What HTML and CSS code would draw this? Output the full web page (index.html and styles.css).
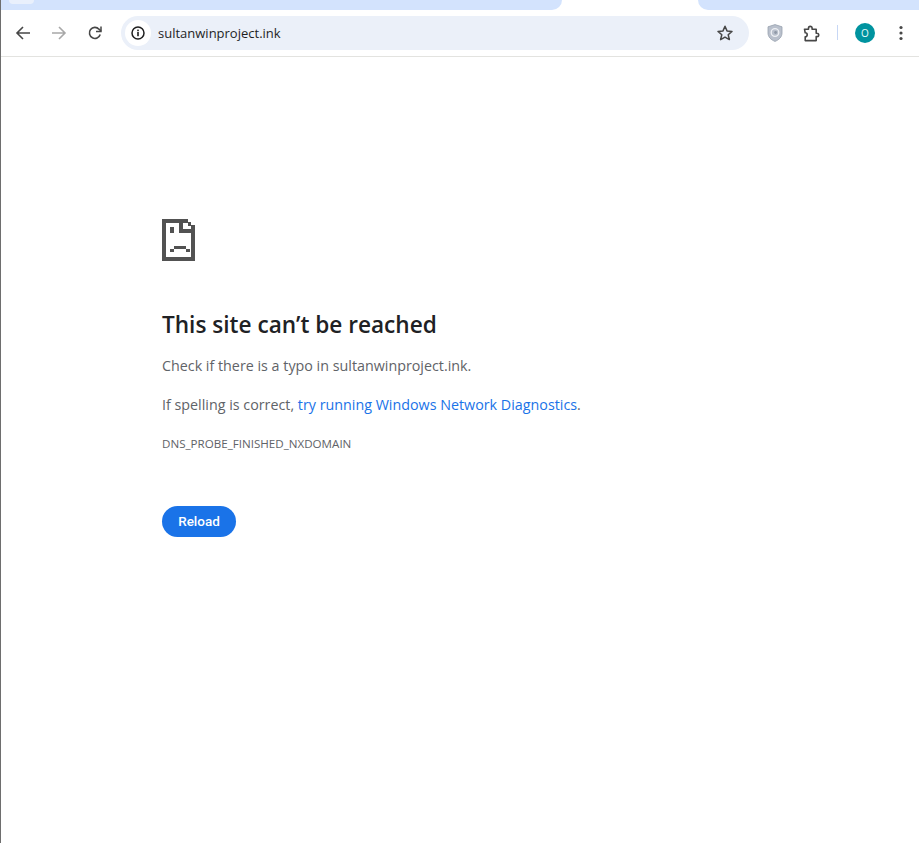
FILE: index.html
```html
<!DOCTYPE html>
<html lang="en">
<head>
<meta charset="utf-8">
<title>sultanwinproject.ink</title>
<link rel="stylesheet" href="styles.css">
</head>
<body>
<div class="window">
  <div class="tabstrip">
    <div class="tab-inactive tab-left"><span class="tab-chip"></span></div>
    <div class="tab-active"></div>
    <div class="tab-inactive tab-right"></div>
  </div>
  <header class="toolbar">
    <button class="nav-btn" aria-label="Back">
      <svg width="16" height="16" viewBox="0 0 16 16" fill="none" stroke="#474747" stroke-width="1.6"><path d="M15 8H2M8 2L2 8l6 6"/></svg>
    </button>
    <button class="nav-btn" aria-label="Forward">
      <svg width="16" height="16" viewBox="0 0 16 16" fill="none" stroke="#a8a8a8" stroke-width="1.6"><path d="M1 8h13M8 2l6 6-6 6"/></svg>
    </button>
    <button class="nav-btn" aria-label="Reload">
      <svg width="16" height="16" viewBox="0 0 16 16" fill="none" stroke="#474747" stroke-width="1.6"><path d="M13.2 9.5A5.500 5.500 0 1 1 12 4.200L14 6"/><path d="M14 1.500V6.600H9" stroke-width="1.500"/></svg>
    </button>
    <div class="omnibox">
      <span class="site-info">
        <svg width="16" height="16" viewBox="0 0 16 16" fill="none"><circle cx="8" cy="8" r="6" stroke="#1f1f1f" stroke-width="1.500"/><rect x="7.200" y="7" width="1.600" height="4.200" fill="#1f1f1f"/><rect x="7.200" y="4.600" width="1.600" height="1.600" fill="#1f1f1f"/></svg>
      </span>
      <span class="url">sultanwinproject.ink</span>
      <svg class="star" width="18" height="18" viewBox="0 0 18 18" fill="none" stroke="#474747" stroke-width="1.500" stroke-linejoin="round"><path d="M9 2.300l2 4.600 5 .5-3.800 3.300 1.200 4.900L9 13.100l-4.400 2.500 1.200-4.900L2 7.400l5-.5z"/></svg>
    </div>
    <div class="actions">
      <svg class="shield" width="16" height="18" viewBox="0 0 16 18"><path d="M8 .6l7 2.200v6.200c0 4-3 6.800-7 8.400C4 15.800 1 13 1 9V2.800z" fill="#b9c0cc" stroke="#98a1ae" stroke-width=".8"/><circle cx="8" cy="8.500" r="3.800" fill="none" stroke="#eef0f4" stroke-width="1.300"/><circle cx="8.600" cy="8.500" r="1.400" fill="#8f98a6"/></svg>
      <svg class="puzzle" width="18" height="18" viewBox="0 0 18 18" fill="none" stroke="#474747" stroke-width="1.600" stroke-linejoin="round"><path d="M2.500 5.200H6.500V4.200A1.800 1.800 0 0 1 10.100 4.200V5.200H14.200V9.200H15A1.700 1.700 0 0 1 15 12.600H14.200V16.600H3.200L3.200 12.800A2 2 0 0 0 3.200 8.800z"/></svg>
      <span class="divider"></span>
      <span class="avatar">O</span>
      <svg class="menu" width="4" height="16" viewBox="0 0 4 16" fill="#474747"><circle cx="2" cy="2.500" r="1.600"/><circle cx="2" cy="8" r="1.600"/><circle cx="2" cy="13.500" r="1.600"/></svg>
    </div>
  </header>
  <main class="page">
    <div class="error-box">
      <svg class="sad-icon" width="34" height="42" viewBox="0 0 34 42" fill="#525252" shape-rendering="crispEdges">
        <path d="M0 0H26V3H29V6H33V42H0ZM4 4V38H29V14H17V4ZM21 4V10H29V7H26V4Z" fill-rule="evenodd"/>
        <rect x="8" y="8" width="4" height="6"/>
        <rect x="12" y="27" width="12" height="3"/>
        <rect x="8" y="30" width="4" height="3"/>
        <rect x="24" y="30" width="4" height="3"/>
      </svg>
      <h1 class="title">This site can’t be reached</h1>
      <p class="line">Check if there is a typo in sultanwinproject.ink.</p>
      <p class="line line-second">If spelling is correct, <a class="link" href="#">try running Windows Network Diagnostics</a>.</p>
      <div class="code">DNS_PROBE_FINISHED_NXDOMAIN</div>
      <button class="reload">Reload</button>
    </div>
  </main>
</div>
</body>
</html>
```

FILE: styles.css
```css
* { box-sizing: border-box; }
html, body { margin: 0; height: 100%; background: #fff; overflow: hidden; }
.window {
  height: 843px;
  border-left: 1px solid #6e6e6e;
  display: flex;
  flex-direction: column;
  font-family: "Open Sans", "Noto Sans", sans-serif;
}
.tabstrip { height: 10px; display: flex; background: #fff; flex: none; }
.tab-inactive { background: #d3e3fd; height: 10px; }
.tab-left { width: 561px; border-radius: 0 0 10px 0; padding-left: 8px; }
.tab-chip { display: block; width: 25px; height: 4px; background: #e9f0fc; border-radius: 0 0 6px 6px; }
.tab-active { width: 136px; background: #fff; }
.tab-right { flex: 1; border-radius: 0 0 0 10px; }
.toolbar {
  height: 47px;
  flex: none;
  background: #fff;
  border-bottom: 1px solid #e3e3e0;
  display: flex;
  align-items: center;
  padding: 0 0 1px 14px;
}
.nav-btn {
  width: 16px; height: 16px; padding: 0; border: 0; background: none;
  margin-right: 20px; display: flex;
}
.omnibox {
  width: 628px;
  height: 34px;
  margin-left: -2px;
  background: #ebf0f9;
  border-radius: 17px;
  display: flex;
  align-items: center;
  padding: 0 15px 0 4px;
}
.site-info {
  width: 26px; height: 26px; border-radius: 50%; background: #fff;
  display: flex; align-items: center; justify-content: center; flex: none;
}
.url {
  margin-left: 7px;
  font-size: 13px;
  color: #1f1f1f;
  flex: 1;
  white-space: nowrap;
}
.star { flex: none; }
.actions { display: flex; align-items: center; flex: 1; padding-left: 18px; }
.shield { flex: none; }
.puzzle { margin-left: 19px; flex: none; }
.divider { width: 1px; height: 15px; background: #c7d7f5; margin-left: 17px; }
.avatar {
  width: 20px; height: 20px; border-radius: 50%;
  background: #00939f; color: #e8fbfc;
  font-size: 10px; margin-left: 17px;
  display: flex; align-items: center; justify-content: center;
}
.menu { margin-left: 24px; }
.page { flex: 1; }
.error-box { padding: 162px 0 0 161px; width: 640px; }
.sad-icon { display: block; }
.title {
  margin: 49px 0 0;
  font-size: 22.6px;
  line-height: 30px;
  font-weight: 600;
  color: #202124;
}
.line {
  margin: 15px 0 0;
  font-size: 14.3px;
  line-height: 22px;
  color: #5f6368;
}
.line-second { margin-top: 17px; }
.link { color: #1a73e8; text-decoration: none; }
.code {
  margin-top: 21px;
  font-size: 11.6px;
  line-height: 14px;
  color: #5f6368;
}
.reload {
  display: block;
  margin-top: 55px;
  width: 74px;
  height: 31px;
  border: 0;
  border-radius: 16px;
  background: #1a73e8;
  color: #fff;
  font-family: Roboto, sans-serif;
  font-size: 13.5px;
  font-weight: 500;
  padding: 0 0 2px;
}
```
